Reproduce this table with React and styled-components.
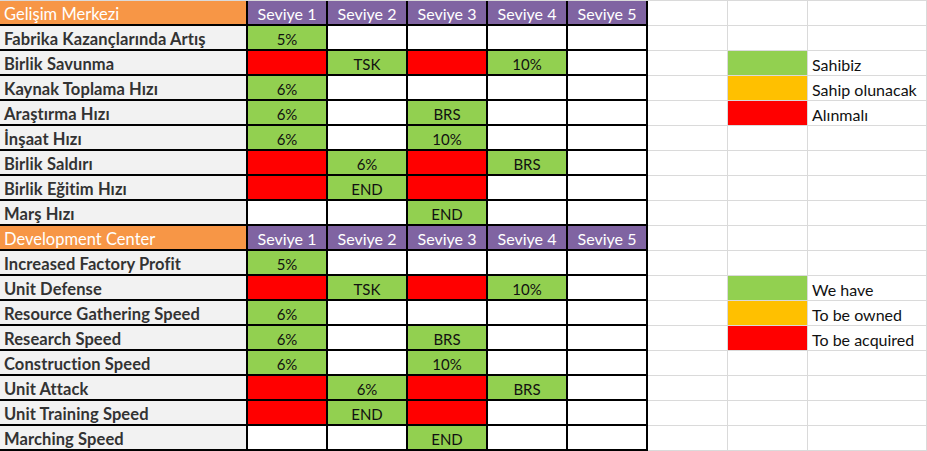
import React from "react";
import styled, { createGlobalStyle } from "styled-components";

const GlobalStyle = createGlobalStyle`
  html, body {
    margin: 0;
    padding: 0;
    background: #ffffff;
  }
  body {
    font-family: Lato, "Open Sans", "Noto Sans", sans-serif;
  }
`;

const COLORS = {
  G: "#92d050",
  R: "#ff0000",
  O: "#ffc000",
  W: "#ffffff",
};

const sections = [
  {
    title: "Gelişim Merkezi",
    legend: ["Sahibiz", "Sahip olunacak", "Alınmalı"],
    rows: [
      ["Fabrika Kazançlarında Artış", [["G", "5%"], ["W"], ["W"], ["W"], ["W"]]],
      ["Birlik Savunma", [["R"], ["G", "TSK"], ["R"], ["G", "10%"], ["W"]]],
      ["Kaynak Toplama Hızı", [["G", "6%"], ["W"], ["W"], ["W"], ["W"]]],
      ["Araştırma Hızı", [["G", "6%"], ["W"], ["G", "BRS"], ["W"], ["W"]]],
      ["İnşaat Hızı", [["G", "6%"], ["W"], ["G", "10%"], ["W"], ["W"]]],
      ["Birlik Saldırı", [["R"], ["G", "6%"], ["R"], ["G", "BRS"], ["W"]]],
      ["Birlik Eğitim Hızı", [["R"], ["G", "END"], ["R"], ["W"], ["W"]]],
      ["Marş Hızı", [["W"], ["W"], ["G", "END"], ["W"], ["W"]]],
    ],
  },
  {
    title: "Development Center",
    legend: ["We have", "To be owned", "To be acquired"],
    rows: [
      ["Increased Factory Profit", [["G", "5%"], ["W"], ["W"], ["W"], ["W"]]],
      ["Unit Defense", [["R"], ["G", "TSK"], ["R"], ["G", "10%"], ["W"]]],
      ["Resource Gathering Speed", [["G", "6%"], ["W"], ["W"], ["W"], ["W"]]],
      ["Research Speed", [["G", "6%"], ["W"], ["G", "BRS"], ["W"], ["W"]]],
      ["Construction Speed", [["G", "6%"], ["W"], ["G", "10%"], ["W"], ["W"]]],
      ["Unit Attack", [["R"], ["G", "6%"], ["R"], ["G", "BRS"], ["W"]]],
      ["Unit Training Speed", [["R"], ["G", "END"], ["R"], ["W"], ["W"]]],
      ["Marching Speed", [["W"], ["W"], ["G", "END"], ["W"], ["W"]]],
    ],
  },
];

const LEGEND_COLORS = ["G", "O", "R"];

const Sheet = styled.div`
  display: grid;
  grid-template-columns: 248px repeat(5, 80px) 80px 80px 1fr;
  grid-auto-rows: 25px;
  width: 927px;
  border-top: 1px solid #dadada;
`;

const Cell = styled.div`
  box-sizing: border-box;
  display: flex;
  align-items: center;
  justify-content: ${(p) => (p.$align === "left" ? "flex-start" : "center")};
  padding: 2px 4px 0;
  background: ${(p) => p.$bg || "#ffffff"};
  border-right: ${(p) => (p.$main ? "2px solid #000" : "1px solid #dadada")};
  border-bottom: ${(p) => (p.$main ? "2px solid #000" : "1px solid #dadada")};
  font-size: 15px;
  color: #111;
  white-space: nowrap;
  overflow: hidden;
`;

const TitleCell = styled(Cell)`
  background: #f79646;
  color: #ffffff;
  font-size: 16.5px;
  padding-left: 4px;
`;

const LevelCell = styled(Cell)`
  background: #8064a2;
  color: #ffffff;
  font-size: 16px;
`;

const LabelCell = styled(Cell)`
  background: #f2f2f2;
  color: #333333;
  font-weight: 700;
  font-size: 16.5px;
  letter-spacing: 0.1px;
`;

const LegendText = styled(Cell)`
  font-size: 16px;
  color: #111;
  padding-left: 4px;
`;

const LEVELS = [1, 2, 3, 4, 5];

const Section = ({ data }) => {
  const out = [];
  out.push(
    <TitleCell key="t" $main $align="left">
      {data.title}
    </TitleCell>
  );
  LEVELS.forEach((n) =>
    out.push(
      <LevelCell key={"l" + n} $main>
        Seviye {n}
      </LevelCell>
    )
  );
  out.push(<Cell key="hg" />, <Cell key="hh" />, <Cell key="hi" />);

  data.rows.forEach(([label, cells], i) => {
    out.push(
      <LabelCell key={"r" + i} $main $align="left">
        {label}
      </LabelCell>
    );
    cells.forEach(([c, text], j) =>
      out.push(
        <Cell key={`c${i}-${j}`} $main $bg={COLORS[c]}>
          {text}
        </Cell>
      )
    );
    // legend sits on rows 2-4 of each block
    const li = i - 1;
    const hasLegend = li >= 0 && li < data.legend.length;
    out.push(<Cell key={"g" + i} />);
    out.push(
      <Cell key={"h" + i} $bg={hasLegend ? COLORS[LEGEND_COLORS[li]] : undefined} />
    );
    out.push(
      <LegendText key={"i" + i} $align="left">
        {hasLegend ? data.legend[li] : ""}
      </LegendText>
    );
  });
  return out;
};

export default function App() {
  return (
    <>
      <GlobalStyle />
      <Sheet>
        {sections.map((s) => (
          <Section key={s.title} data={s} />
        ))}
      </Sheet>
    </>
  );
}
